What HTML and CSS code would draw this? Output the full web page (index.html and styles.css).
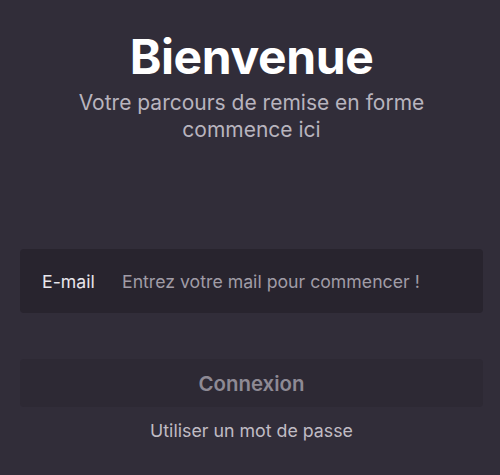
FILE: index.html
```html
<!DOCTYPE html>
<html lang="fr">
<head>
	<meta charset="UTF-8">
	<meta name="viewport" content="width=device-width, initial-scale=1.0">
	<title>Bienvenue</title>
	<link rel="stylesheet" href="styles.css">
</head>
<body>
	<div class='screen'>
		<div class='header'>
			<h1 class='title'>Bienvenue</h1>
			<p class='subtitle'>Votre parcours de remise en forme<br>commence ici</p>
		</div>

		<div class='field'>
			<label class='field-label' for='email'>E-mail</label>
			<input id='email' class='field-input' type='email' placeholder='Entrez votre mail pour commencer !'>
		</div>

		<button class='login' type='button'>Connexion</button>
		<a class='password' href='#'>Utiliser un mot de passe</a>
	</div>
</body>
</html>
```

FILE: styles.css
```css
*{
	box-sizing: border-box;
	margin: 0px;
	padding: 0px;
}

html,body{
	height: 100%;
}

body{
	background-color: rgb(49, 45, 57);
	font-family: Inter, "Noto Sans", sans-serif;
	color: white;
}

.screen{
	display: flex;
	flex-direction: column;
	align-items: center;
	padding: 29px 17px 0 20px;
}

.header{
	text-align: center;
}

.title{
	font-size: 48px;
	font-weight: 700;
	line-height: 56px;
	letter-spacing: -0.4px;
}

.subtitle{
	margin-top: 4px;
	font-size: 21px;
	line-height: 27px;
	color: rgb(184, 180, 190);
}

.field{
	width: 100%;
	height: 64px;
	margin-top: 106px;
	display: flex;
	align-items: center;
	padding: 0 22px;
	background-color: rgb(40, 36, 46);
	border-radius: 4px;
}

.field-label{
	width: 80px;
	font-size: 17.7px;
	color: rgb(232, 230, 236);
}

.field-input{
	flex: 1;
	background: transparent;
	border: none;
	outline: none;
	font-family: inherit;
	font-size: 17.7px;
	color: white;
}

.field-input::placeholder{
	color: rgb(160, 156, 166);
}

.login{
	width: 100%;
	height: 48px;
	margin-top: 46px;
	background-color: rgb(45, 41, 52);
	border: none;
	border-radius: 4px;
	font-family: inherit;
	font-size: 20.4px;
	font-weight: 600;
	color: rgb(142, 138, 148);
}

.password{
	margin-top: 13px;
	font-size: 17.8px;
	color: rgb(192, 188, 196);
	text-decoration: none;
}
```
